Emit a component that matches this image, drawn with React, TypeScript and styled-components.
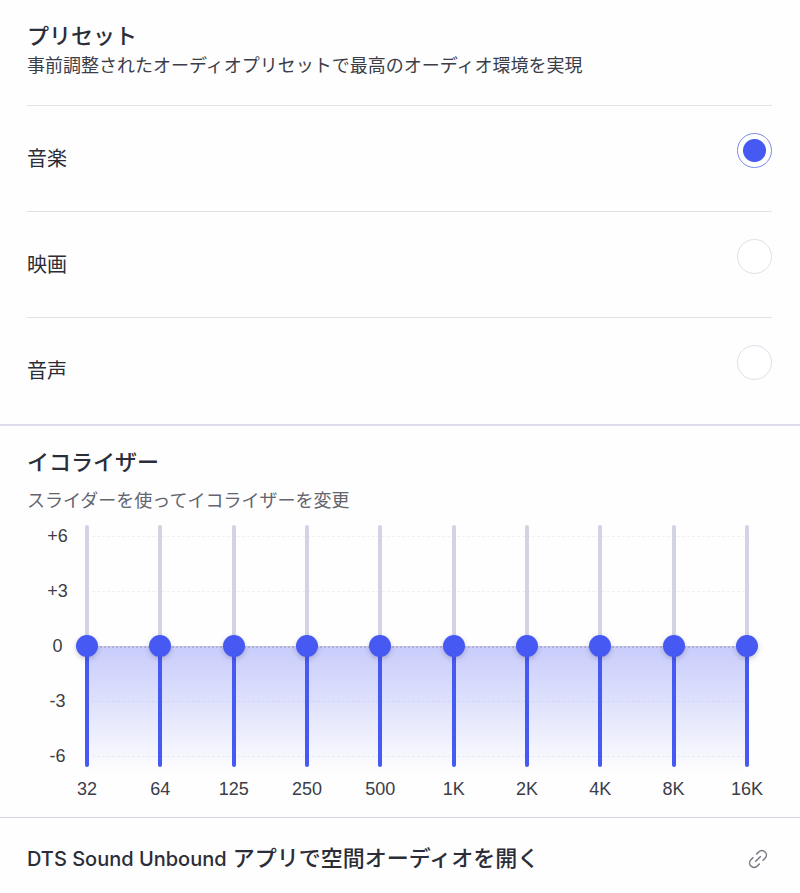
import React, { useState } from "react";
import styled, { createGlobalStyle } from "styled-components";

const color = {
  text: "#2b2d38",
  soft: "#3b3d48",
  muted: "#62646f",
  accent: "#4659f3",
  track: "#d2d3e3",
  line: "#e1e1e6",
  sectionLine: "#dcdcec",
};

const GlobalStyle = createGlobalStyle`
  *, *::before, *::after { box-sizing: border-box; }
  body {
    margin: 0;
    background: #fefefe;
    color: ${color.text};
    font-family: "Liberation Sans", "Noto Sans CJK JP", sans-serif;
  }
`;

const Page = styled.main`
  display: flex;
  flex-direction: column;
`;

const Section = styled.section`
  padding: 21px 28px 0 27px;
`;

const EqualizerSection = styled(Section)`
  border-top: 2px solid ${color.sectionLine};
  padding-bottom: 17px;
`;

const Title = styled.h2`
  margin: 0;
  font-size: 22px;
  line-height: 32px;
  font-weight: 500;
`;

const Description = styled.p<{ $muted?: boolean }>`
  margin: ${(p) => (p.$muted ? "9px 0 0" : "0")};
  font-size: 18px;
  line-height: 26px;
  color: ${(p) => (p.$muted ? color.muted : color.soft)};
`;

const PresetList = styled.fieldset`
  margin: 26px 0 0;
  padding: 0 0 1px;
  border: 0;
  min-width: 0;
`;

const PresetRow = styled.label`
  display: flex;
  align-items: center;
  justify-content: space-between;
  height: 106px;
  border-top: 1px solid ${color.line};
  font-size: 20px;
  line-height: 28px;
  cursor: pointer;
`;

const Radio = styled.input`
  appearance: none;
  align-self: flex-start;
  width: 35px;
  height: 35px;
  margin: 27px 0 0;
  border: 1px solid #dfdfea;
  border-radius: 50%;
  background: #fff;
  cursor: pointer;

  &:checked {
    border-color: #7c89ee;
    background: radial-gradient(circle, ${color.accent} 11px, #fff 12px);
  }
`;

const Chart = styled.div`
  display: grid;
  grid-template-columns: 49px 1fr;
  margin: 11px 14px 0 0;
`;

const Scale = styled.div`
  display: flex;
  flex-direction: column;
  justify-content: space-between;
  padding-left: 12px;
  text-align: center;
  font-size: 18px;
  line-height: 22px;
  color: ${color.soft};
`;

const Plot = styled.div`
  display: grid;
  height: 242px;

  > * {
    grid-area: 1 / 1;
  }
`;

const Fill = styled.div`
  margin: 121px 11px -6px;
  background: linear-gradient(#c8ccfb, #dcdffc 40%, #fefefe);
`;

const GridLines = styled.div`
  display: flex;
  flex-direction: column;
  justify-content: space-between;
  padding: 11px 11px 10px 16px;
`;

const GridLine = styled.div<{ $zero: boolean }>`
  height: ${(p) => (p.$zero ? "2px" : "1px")};
  background: ${(p) =>
    p.$zero
      ? "repeating-linear-gradient(90deg, #b0b2d0 0 2px, transparent 2px 4px)"
      : "repeating-linear-gradient(90deg, rgba(60, 60, 90, 0.07) 0 3px, transparent 3px 5px)"};
`;

const Bands = styled.div`
  display: flex;
  justify-content: space-between;
`;

const Slider = styled.input`
  appearance: none;
  writing-mode: vertical-lr;
  direction: rtl;
  width: 22px;
  height: 242px;
  margin: 0;
  background: transparent;
  cursor: pointer;

  &::-webkit-slider-runnable-track {
    width: 4px;
    height: 242px;
    border-radius: 2px;
    background: linear-gradient(
      to top,
      ${color.accent} var(--level),
      ${color.track} var(--level)
    );
  }

  &::-webkit-slider-thumb {
    appearance: none;
    width: 22px;
    height: 22px;
    margin-left: -9px;
    border-radius: 50%;
    background: ${color.accent};
    box-shadow: 0 2px 5px rgba(50, 50, 90, 0.25);
  }
`;

const Frequencies = styled(Bands)`
  grid-column: 2;
  margin-top: 11px;
  font-size: 18px;
  line-height: 22px;
  color: ${color.soft};
`;

const Frequency = styled.label`
  display: flex;
  justify-content: center;
  width: 22px;
  white-space: nowrap;
`;

const AppLink = styled.a`
  display: flex;
  align-items: center;
  justify-content: space-between;
  padding: 25px 30px 18px 27px;
  border-top: 1px solid #d4d4e8;
  color: inherit;
  text-decoration: none;
`;

const LinkTitle = styled.span`
  font-size: 22px;
  line-height: 32px;
  font-weight: 500;
`;

const AppName = styled.span`
  font-family: Inter, sans-serif;
  font-size: 20px;
`;

const presets = ["音楽", "映画", "音声"];
const levels = ["+6", "+3", "0", "-3", "-6"];
const bands = ["32", "64", "125", "250", "500", "1K", "2K", "4K", "8K", "16K"];

function LinkIcon() {
  return (
    <svg width="24" height="24" viewBox="0 0 24 24" fill="none" stroke="#777985" strokeWidth="1.5" aria-hidden="true">
      <g transform="rotate(-45 12 12)">
        <path d="M10 16.5H6.5A4.5 4.5 0 0 1 6.5 7.5H10M14 7.5h3.5a4.5 4.5 0 0 1 0 9H14M8 12h8" />
      </g>
    </svg>
  );
}

export default function App() {
  const [preset, setPreset] = useState(presets[0]);
  const [gains, setGains] = useState(bands.map(() => 0));

  const setGain = (index: number, value: number) =>
    setGains((current) => current.map((gain, i) => (i === index ? value : gain)));

  return (
    <Page>
      <GlobalStyle />
      <Section>
        <Title id="preset-title">プリセット</Title>
        <Description>事前調整されたオーディオプリセットで最高のオーディオ環境を実現</Description>
        <PresetList aria-labelledby="preset-title">
          {presets.map((name) => (
            <PresetRow key={name}>
              {name}
              <Radio type="radio" name="preset" checked={preset === name} onChange={() => setPreset(name)} />
            </PresetRow>
          ))}
        </PresetList>
      </Section>

      <EqualizerSection>
        <Title>イコライザー</Title>
        <Description $muted>スライダーを使ってイコライザーを変更</Description>
        <Chart>
          <Scale>
            {levels.map((level) => (
              <span key={level}>{level}</span>
            ))}
          </Scale>
          <Plot>
            <Fill />
            <GridLines>
              {levels.map((level) => (
                <GridLine key={level} $zero={level === "0"} />
              ))}
            </GridLines>
            <Bands>
              {bands.map((band, i) => (
                <Slider
                  key={band}
                  id={`band-${band}`}
                  type="range"
                  min={-6}
                  max={6}
                  step={1}
                  value={gains[i]}
                  onChange={(e) => setGain(i, Number(e.target.value))}
                  style={{ "--level": `${((gains[i] + 6) / 12) * 100}%` } as React.CSSProperties}
                />
              ))}
            </Bands>
          </Plot>
          <Frequencies>
            {bands.map((band) => (
              <Frequency key={band} htmlFor={`band-${band}`}>
                {band}
              </Frequency>
            ))}
          </Frequencies>
        </Chart>
      </EqualizerSection>

      <AppLink href="#spatial-audio">
        <LinkTitle>
          <AppName>DTS Sound Unbound</AppName> アプリで空間オーディオを開く
        </LinkTitle>
        <LinkIcon />
      </AppLink>
    </Page>
  );
}
